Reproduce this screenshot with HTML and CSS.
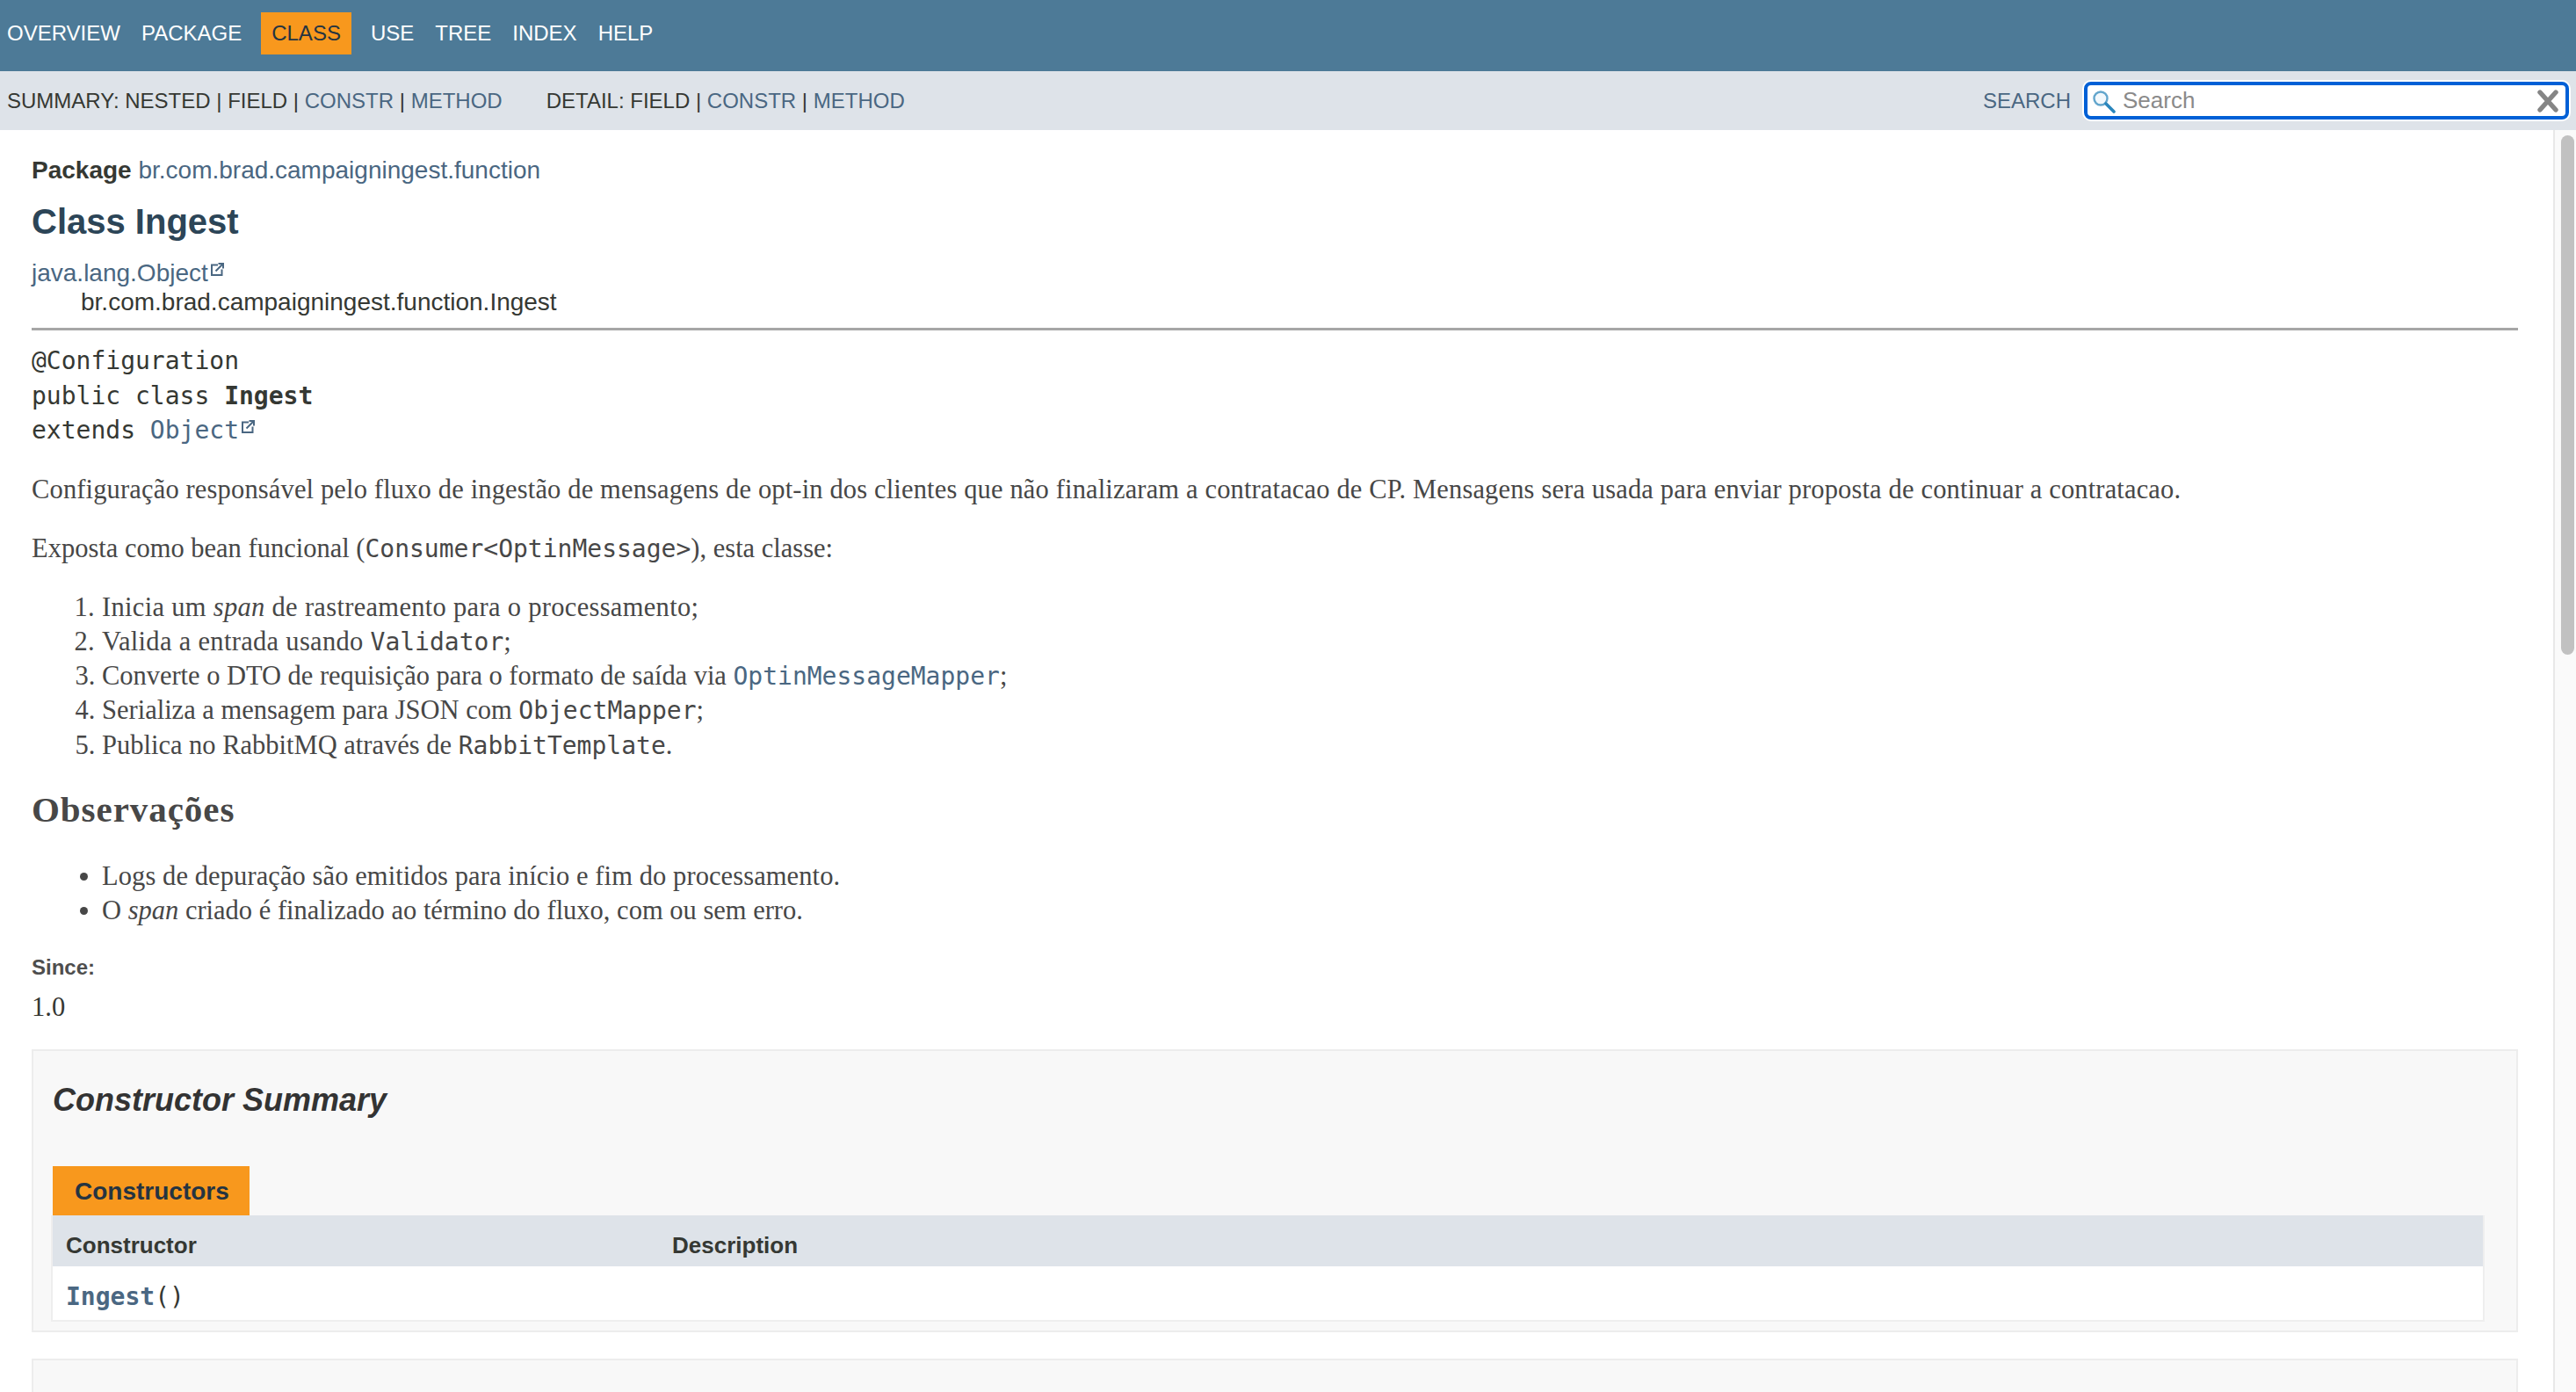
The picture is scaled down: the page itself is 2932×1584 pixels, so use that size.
FILE: index.html
```html
<!DOCTYPE html>
<html lang="pt">
<head>
<meta charset="utf-8">
<title>Ingest</title>
<link rel="stylesheet" href="styles.css">
</head>
<body>
<header class="topnav">
  <ul class="navlist">
    <li>Overview</li>
    <li>Package</li>
    <li class="active">Class</li>
    <li>Use</li>
    <li>Tree</li>
    <li>Index</li>
    <li>Help</li>
  </ul>
</header>
<div class="subnav">
  <div class="subnav-links">
    <div>SUMMARY: NESTED | FIELD | <a href="#c">CONSTR</a> | <a href="#m">METHOD</a></div>
    <div>DETAIL: FIELD | <a href="#c">CONSTR</a> | <a href="#m">METHOD</a></div>
  </div>
  <div class="search">
    <a class="search-label" href="#s">SEARCH</a>
    <div class="search-box">
      <svg class="search-icon" width="28" height="28" viewBox="0 0 28 28" aria-hidden="true">
        <circle cx="11" cy="11" r="7.5" fill="#f2f8fc" stroke="#62a5cc" stroke-width="2.4"/>
        <path d="M17 17 L26 26" stroke="#2a86bc" stroke-width="3.6" stroke-linecap="round"/>
      </svg>
      <input class="search-input" type="text" placeholder="Search" aria-label="Search">
      <svg class="search-reset" width="26" height="26" viewBox="0 0 26 26" aria-hidden="true">
        <path d="M4 3 L22 23 M22 3 L4 23" stroke="#858585" stroke-width="5.4" stroke-linecap="round"/>
      </svg>
    </div>
  </div>
</div>
<div class="body-row">
  <main class="content">
    <div class="pkg"><strong>Package</strong> <a href="#p">br.com.brad.campaigningest.function</a></div>
    <h1 class="title">Class Ingest</h1>
    <div class="inherit inherit-root"><a href="#o">java.lang.Object<svg class="ext" width="15" height="15" viewBox="0 0 15 15" aria-hidden="true"><path d="M8 2.5 H1 V14 H12.5 V7.5" fill="none" stroke="#4a6782" stroke-width="2"/><path d="M5.5 9.5 L13 2 M8.5 1 H14 V6.5" fill="none" stroke="#4a6782" stroke-width="2"/></svg></a></div>
    <div class="inherit inherit-child">br.com.brad.campaigningest.function.Ingest</div>
    <hr class="rule">
    <div class="signature">
      <div>@Configuration</div>
      <div>public class <b>Ingest</b></div>
      <div>extends <a href="#o">Object<svg class="ext" width="15" height="15" viewBox="0 0 15 15" aria-hidden="true"><path d="M8 2.5 H1 V14 H12.5 V7.5" fill="none" stroke="#4a6782" stroke-width="2"/><path d="M5.5 9.5 L13 2 M8.5 1 H14 V6.5" fill="none" stroke="#4a6782" stroke-width="2"/></svg></a></div>
    </div>
    <p class="para track-p">Configuração responsável pelo fluxo de ingestão de mensagens de opt-in dos clientes que não finalizaram a contratacao de CP. Mensagens sera usada para enviar proposta de continuar a contratacao.</p>
    <p class="para">Exposta como bean funcional (<code>Consumer&lt;OptinMessage&gt;</code>), esta classe:</p>
    <ol class="list">
      <li class="track-l">Inicia um <em>span</em> de rastreamento para o processamento;</li>
      <li class="track-l">Valida a entrada usando <code>Validator</code>;</li>
      <li class="track-n">Converte o DTO de requisição para o formato de saída via <a href="#m"><code>OptinMessageMapper</code></a>;</li>
      <li>Serializa a mensagem para JSON com <code>ObjectMapper</code>;</li>
      <li>Publica no RabbitMQ através de <code>RabbitTemplate</code>.</li>
    </ol>
    <h2 class="obs">Observações</h2>
    <ul class="list bullets">
      <li class="track-b">Logs de depuração são emitidos para início e fim do processamento.</li>
      <li>O <em>span</em> criado é finalizado ao término do fluxo, com ou sem erro.</li>
    </ul>
    <div class="since-label">Since:</div>
    <div class="since-value">1.0</div>
    <section class="summary">
      <h2 class="summary-title">Constructor Summary</h2>
      <div class="tab">Constructors</div>
      <div class="table">
        <div class="thead">
          <div>Constructor</div>
          <div>Description</div>
        </div>
        <div class="trow">
          <div class="member"><a href="#i"><b>Ingest</b></a>()</div>
          <div></div>
        </div>
      </div>
    </section>
    <section class="summary summary-next"></section>
  </main>
  <div class="scrollbar"><div class="thumb"></div></div>
</div>
</body>
</html>
```

FILE: styles.css
```css
* { box-sizing: border-box; }
html, body { margin: 0; height: 100%; overflow: hidden; }
body {
  display: flex;
  flex-direction: column;
  background: #fff;
  color: #353833;
  font-family: "Liberation Sans", Arial, sans-serif;
  font-size: 28px;
}
a { color: #4a6782; text-decoration: none; }

.topnav { height: 81px; background: #4d7a97; padding: 14px 0 0 8px; flex: none; }
.navlist {
  display: flex;
  gap: 24px;
  margin: 0;
  padding: 0;
  list-style: none;
  color: #fff;
  font-size: 24px;
  line-height: 47px;
  text-transform: uppercase;
}
.navlist li.active {
  height: 48px;
  margin: 0 -2px;
  padding: 0 12px;
  background: #f8981d;
  color: #253441;
}

.subnav {
  height: 67px;
  flex: none;
  display: flex;
  justify-content: space-between;
  background: #dee3e9;
  padding: 20px 8px 0 8px;
  font-size: 24px;
  line-height: 28px;
}
.subnav-links { display: flex; gap: 50px; }
.search { display: flex; gap: 15px; }
.search-box {
  display: flex;
  align-items: center;
  width: 552px;
  height: 43px;
  margin-top: -8px;
  padding: 0 7px 0 4px;
  background: #fff;
  border: 4px solid #0060d6;
  border-radius: 8px;
  box-shadow: 0 0 0 2px #fff;
}
.search-icon { flex: none; }
.search-input {
  flex: 1;
  min-width: 0;
  height: 100%;
  margin-left: 8px;
  padding: 0;
  border: 0;
  outline: 0;
  background: transparent;
  font: 26px "Liberation Sans", Arial, sans-serif;
  color: #353833;
}
.search-input::placeholder { color: #8a8a8a; opacity: 1; }
.search-reset { flex: none; }

.body-row { flex: 1; min-height: 0; display: flex; }
.content { flex: 1; min-width: 0; padding: 0 40px 0 36px; overflow: hidden; }
.scrollbar {
  flex: none;
  width: 26px;
  padding: 6px 2px 0 7px;
  background: #fafafa;
  border-left: 2px solid #e8e8e8;
}
.thumb { height: 591px; background: #c1c1c1; border-radius: 8px; }

.pkg { margin-top: 29px; line-height: 34px; }
.pkg strong { color: #353833; }
.title { margin: 18px 0 0; color: #2c4557; font-size: 40px; line-height: 46px; font-weight: 700; }
.inherit { line-height: 34px; }
.inherit-root { margin-top: 19px; line-height: 33px; }
.inherit-child { padding-left: 56px; }
.ext { margin-left: 3px; vertical-align: 6px; }
.rule { height: 3px; margin: 12px 0 0; border: 0; background: #a6a6a6; }

.signature {
  margin-top: 15px;
  font-family: "DejaVu Sans Mono", monospace;
  font-size: 28px;
  line-height: 39.5px;
}
code { font-family: "DejaVu Sans Mono", monospace; font-size: 28px; line-height: 1; letter-spacing: 0; }

.para, .list, .since-value {
  font-family: "Liberation Serif", "Times New Roman", serif;
  font-size: 30.5px;
  line-height: 39px;
  color: #474747;
}
.para { margin: 28px 0 0; }
.track-p { letter-spacing: 0.15px; }
.track-b { letter-spacing: 0.09px; }
.track-l { letter-spacing: 0.31px; }
.track-n { letter-spacing: -0.03px; }
.list { margin: 28px 0 0; padding-left: 80px; }
.list li { line-height: 39.25px; }
.bullets { margin-top: 37px; }
.obs {
  margin: 33px 0 0;
  font-family: "Liberation Serif", "Times New Roman", serif;
  font-size: 41px;
  line-height: 40px;
  letter-spacing: 0.95px;
  font-weight: 700;
  color: #474747;
}
.since-label { margin-top: 31px; font-size: 24px; line-height: 28px; font-weight: 700; color: #4e4e4e; }
.since-value { margin-top: 12px; color: #353833; }

.summary {
  margin-top: 28px;
  padding: 35px 36px 10px 20px;
  background: #f8f8f8;
  border: 2px solid #ededed;
}
.summary-next { margin-top: 30px; height: 200px; }
.summary-title {
  margin: 0 0 0 2px;
  font-size: 36px;
  line-height: 42px;
  font-style: italic;
  font-weight: 700;
  color: #333;
}
.tab {
  width: 224px;
  height: 56px;
  margin: 54px 0 0 2px;
  padding: 1px 0 0 25px;
  background: #f8981d;
  color: #253441;
  font-weight: 700;
  line-height: 56px;
  overflow: hidden;
}
.table { border: 2px solid #eee; border-top: 0; background: #fff; }
.thead, .trow { display: grid; grid-template-columns: 690px 1fr; padding-left: 15px; }
.thead {
  height: 58px;
  padding-top: 10px;
  background: #dee3e9;
  font-size: 26px;
  line-height: 48px;
  font-weight: 700;
}
.trow { height: 61px; padding-top: 18px; }
.member { font-family: "DejaVu Sans Mono", monospace; line-height: 34px; }
```
